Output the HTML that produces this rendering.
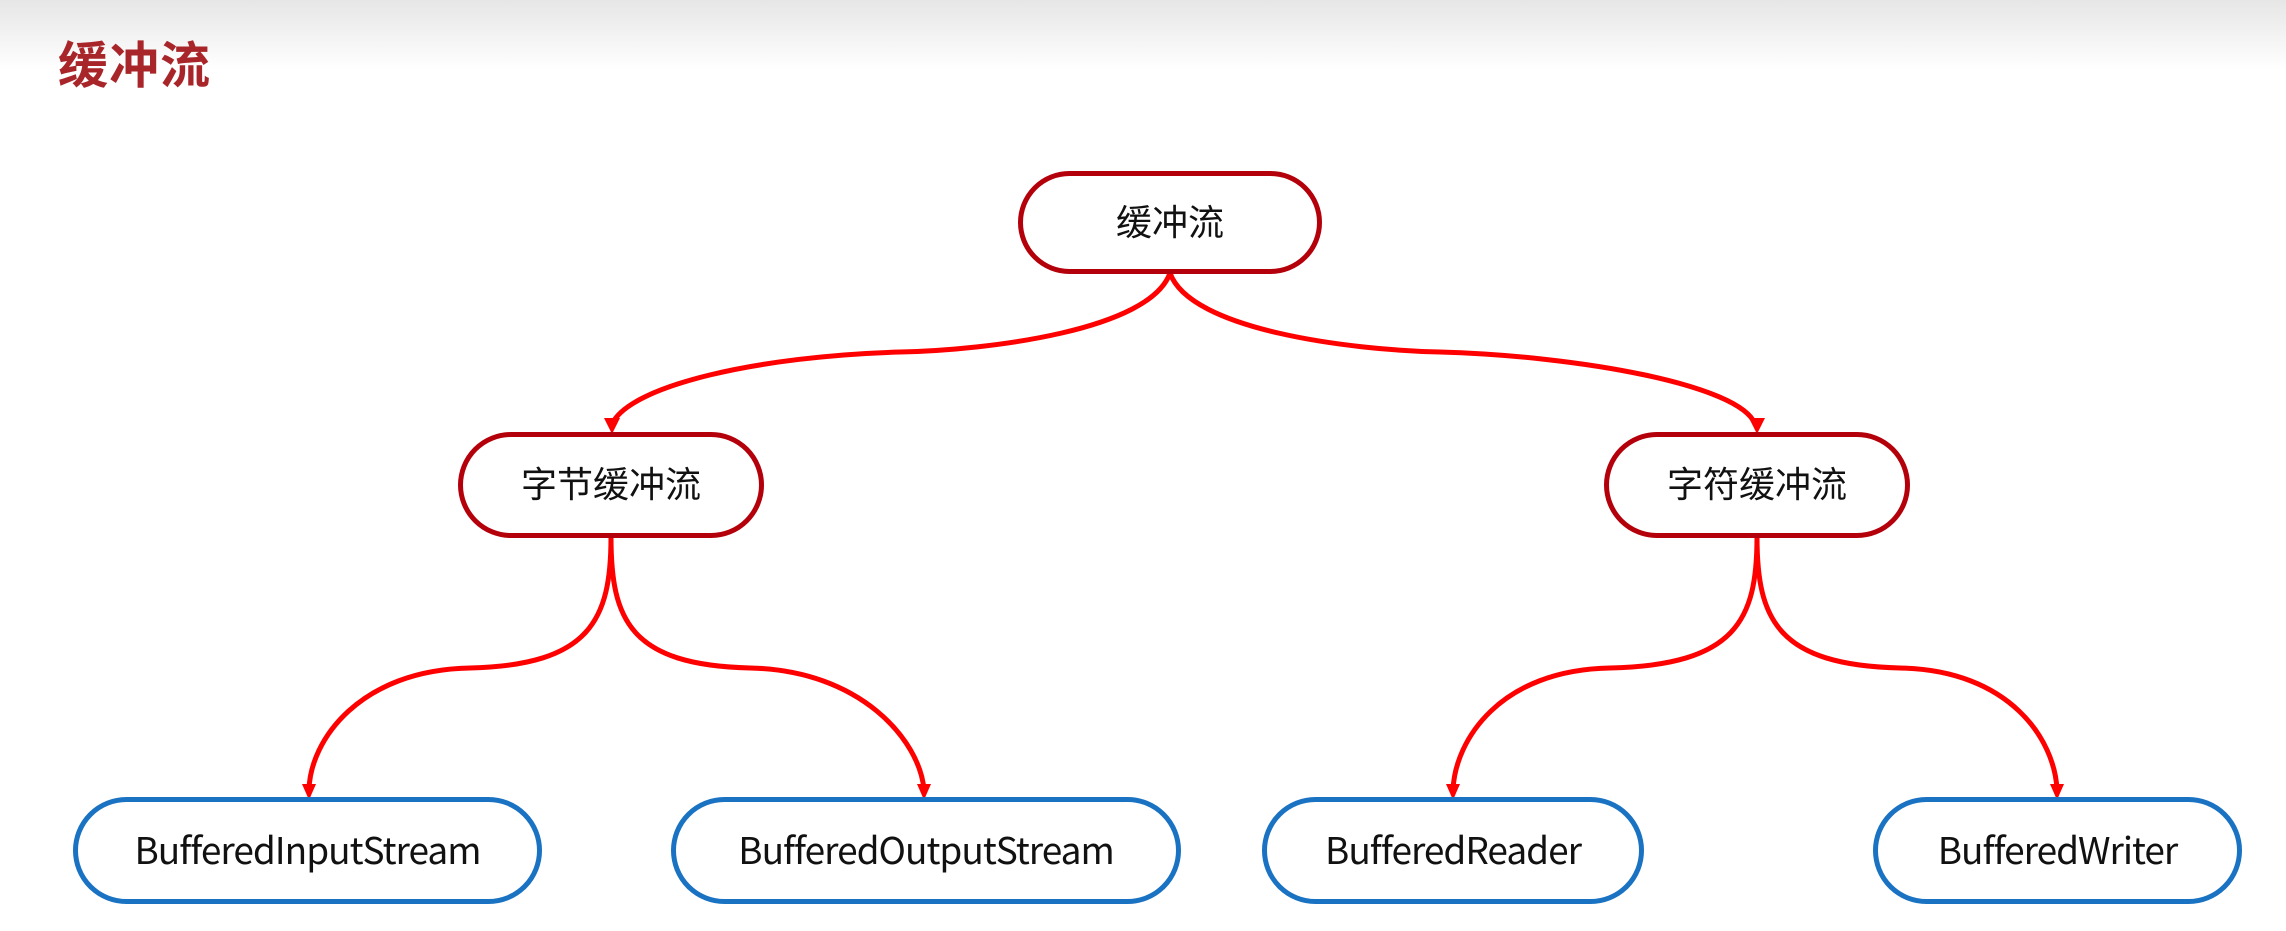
<!DOCTYPE html>
<html><head><meta charset="utf-8"><style>
html,body{margin:0;padding:0;}
body{width:2286px;height:931px;position:relative;overflow:hidden;background:#fff;font-family:"Liberation Sans","Noto Sans CJK SC",sans-serif;}
.hdr{position:absolute;left:0;top:0;width:2286px;height:70px;background:linear-gradient(#e6e6e6,#fff);}
.title{position:absolute;left:58px;top:26px;font-size:50px;font-weight:bold;color:#a8262a;font-family:"Noto Sans CJK SC",sans-serif;letter-spacing:1px;}
.n{position:absolute;box-sizing:border-box;border-radius:60px;background:#fff;display:flex;align-items:center;justify-content:center;color:#111;font-family:"Noto Sans CJK SC","Liberation Sans",sans-serif;padding-bottom:6px;}
.r{border:5px solid #b4000a;font-size:36px;}
.b{border:5px solid #1a72c2;font-size:37px;letter-spacing:-1px;}
svg{position:absolute;left:0;top:0;}
</style></head><body>
<div class="hdr"></div>
<div class="title">缓冲流</div>
<svg width="2286" height="931" viewBox="0 0 2286 931">
<g fill="none" stroke="#f00" stroke-width="5">
<path d="M1170 273 C1150 330 990 350 900 352 C760 356 630 385 612 424"/>
<path d="M1170 273 C1190 330 1350 350 1440 352 C1580 356 1740 385 1755 424"/>
<path d="M611 537 C611 620 590 665 470 668 C360 670 310 740 309 790"/>
<path d="M611 537 C611 620 630 665 750 668 C860 670 920 740 924 790"/>
<path d="M1757 537 C1757 620 1736 665 1610 668 C1500 670 1455 740 1453 790"/>
<path d="M1757 537 C1757 620 1778 665 1900 668 C2010 670 2055 740 2057 790"/>
</g>
<g fill="#f00">
<path d="M604 418 L620 418 L612 434Z"/>
<path d="M1749 418 L1765 418 L1757 434Z"/>
<path d="M302 784 L316 784 L309 800Z"/>
<path d="M917 784 L931 784 L924 800Z"/>
<path d="M1446 784 L1460 784 L1453 800Z"/>
<path d="M2050 784 L2064 784 L2057 800Z"/>
</g>
</svg>
<div class="n r" style="left:1018px;top:171px;width:304px;height:103px;">缓冲流</div>
<div class="n r" style="left:458px;top:432px;width:306px;height:106px;">字节缓冲流</div>
<div class="n r" style="left:1604px;top:432px;width:306px;height:106px;">字符缓冲流</div>
<div class="n b" style="left:73px;top:797px;width:469px;height:107px;">BufferedInputStream</div>
<div class="n b" style="left:671px;top:797px;width:510px;height:107px;">BufferedOutputStream</div>
<div class="n b" style="left:1262px;top:797px;width:382px;height:107px;">BufferedReader</div>
<div class="n b" style="left:1873px;top:797px;width:369px;height:107px;">BufferedWriter</div>
</body></html>
